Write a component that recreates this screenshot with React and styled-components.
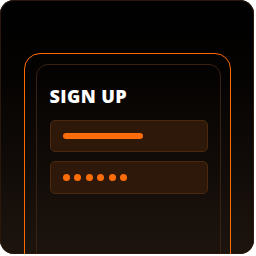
import React from "react";
import styled, { createGlobalStyle } from "styled-components";

const Global = createGlobalStyle`
  html, body { margin: 0; padding: 0; background: #ffffff; }
  body { font-family: Inter, "Noto Sans", sans-serif; }
`;

const Card = styled.div`
  box-sizing: border-box;
  width: 254px;
  height: 254px;
  border-radius: 14px;
  overflow: hidden;
  background: linear-gradient(180deg, #000000 0%, #050302 30%, #1d140e 100%);
  box-shadow: inset 0 0 0 1px #2a180c;
  display: flex;
  padding: 53px 23px 0 24px;
`;

const OuterFrame = styled.div`
  box-sizing: border-box;
  flex: 1;
  height: 230px;
  border: 1.5px solid #ff6a00;
  border-radius: 16px 16px 0 0;
  padding: 10px 9px 0 10.5px;
  display: flex;
`;

const InnerFrame = styled.div`
  box-sizing: border-box;
  flex: 1;
  height: 220px;
  border: 1px solid #3a2213;
  border-radius: 12px;
  padding: 19px 12px 0 13px;
  display: flex;
  flex-direction: column;
  gap: 9px;
`;

const Title = styled.h1`
  margin: 0 0 3px 0;
  font-family: "Open Sans", sans-serif;
  font-weight: 800;
  font-size: 18px;
  line-height: 24px;
  color: #ffffff;
  letter-spacing: 0.4px;
`;

const Field = styled.div`
  box-sizing: border-box;
  height: ${(p) => p.$h}px;
  border: 1px solid #4a290f;
  border-radius: 5px;
  background: #2d1809;
  display: flex;
  align-items: center;
  padding-left: 12px;
  gap: 4.6px;
`;

const Bar = styled.div`
  width: 80px;
  height: 6px;
  border-radius: 3px;
  background: #ff6c0a;
`;

const Dot = styled.span`
  width: 7px;
  height: 7px;
  border-radius: 50%;
  background: #ff6c0a;
`;

export default function App() {
  return (
    <>
      <Global />
      <Card>
        <OuterFrame>
          <InnerFrame>
            <Title>SIGN UP</Title>
            <Field $h={32}>
              <Bar />
            </Field>
            <Field $h={33}>
              {[0, 1, 2, 3, 4, 5].map((i) => (
                <Dot key={i} />
              ))}
            </Field>
          </InnerFrame>
        </OuterFrame>
      </Card>
    </>
  );
}
